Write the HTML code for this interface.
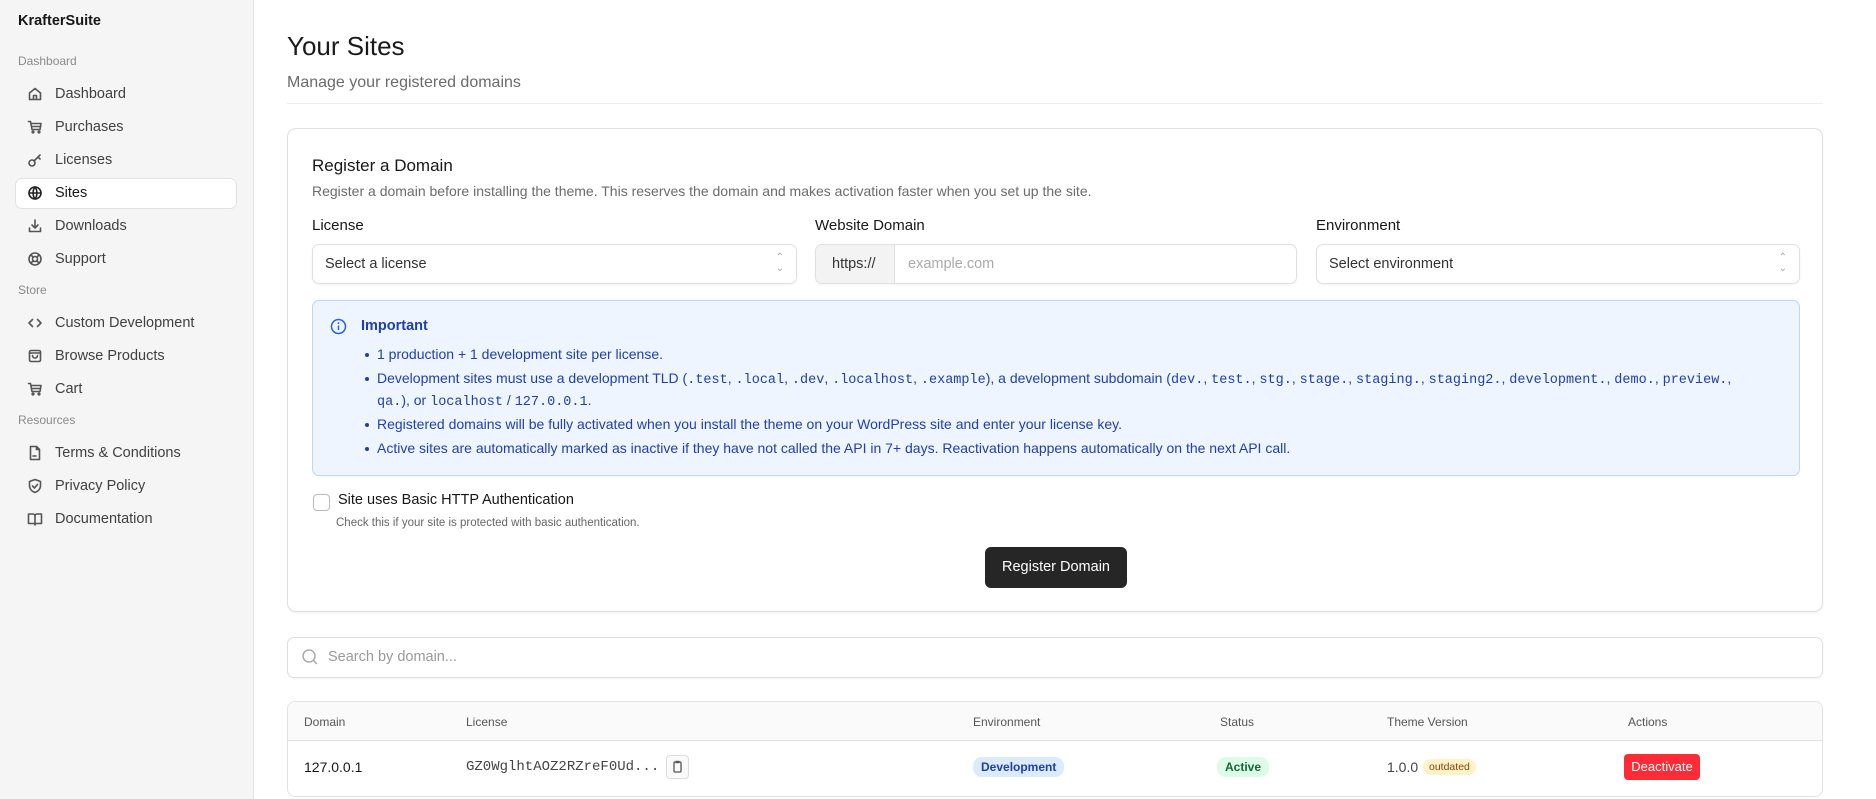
<!DOCTYPE html>
<html><head><meta charset="utf-8"><style>
*{box-sizing:border-box;margin:0;padding:0}
body{width:1876px;height:799px;overflow:hidden;background:#fff;font-family:"Liberation Sans",sans-serif;color:#171717;position:relative}
.a{position:absolute;white-space:nowrap}
.side{position:absolute;left:0;top:0;width:254px;height:799px;background:#f5f5f5;border-right:1px solid #e5e5e5}
.sec{font-size:12px;color:#8a8a8a;left:18px}
.nav{left:55px;font-size:14.5px;color:#404040;transform:translateY(-50%)}
.ic{position:absolute;left:27px;width:16px;height:16px;transform:translateY(-50%)}
.ic svg{width:16px;height:16px;fill:none;stroke:#555;stroke-width:1.6;stroke-linecap:round;stroke-linejoin:round}
.lbl{font-size:15px;color:#171717}
.box{position:absolute;border:1px solid #e0e0e0;border-radius:7px;background:#fff;box-shadow:0 1px 2px rgba(0,0,0,.05)}
.ph{font-size:14.5px;color:#333}
.info li{list-style:none;position:absolute;left:377px;font-size:14px;color:#1e40af;white-space:nowrap}
.info li:before{content:"";position:absolute;left:-12px;top:7px;width:4px;height:4px;border-radius:50%;background:#1e40af}
.info li.nb:before{display:none}
code{font-family:"Liberation Mono",monospace;font-size:13.5px}
.th{font-size:12px;color:#555;top:722px;transform:translateY(-50%)}
.td{top:767px;transform:translateY(-50%)}
.badge{border-radius:9px;font-size:12px;font-weight:bold;padding:3px 8px}
</style></head><body>
<div class="side">
<div class="a" style="left:18px;top:13px;font-size:14.5px;font-weight:bold">KrafterSuite</div>
<div class="a sec" style="top:54px">Dashboard</div>
<div class="a" style="left:15px;top:178px;width:222px;height:31px;background:#fff;border:1px solid #e2e2e2;border-radius:7px"></div>
<div class="ic" style="top:94px"><svg viewBox="0 0 16 16"><path d="M2.5 7L8 2.5 13.5 7v6.5h-11z M6.5 13.5v-4h3v4"/></svg></div>
<div class="a nav" style="top:94px">Dashboard</div>
<div class="ic" style="top:127px"><svg viewBox="0 0 16 16"><path d="M1.5 2.5h2l1.5 8h8l1-6H4 M5 7.5h8.5"/><circle cx="6" cy="13" r=".8"/><circle cx="12" cy="13" r=".8"/></svg></div>
<div class="a nav" style="top:127px">Purchases</div>
<div class="ic" style="top:160px"><svg viewBox="0 0 16 16"><circle cx="5" cy="11" r="3"/><path d="M7 9l6-6 M11 5l2 2"/></svg></div>
<div class="a nav" style="top:160px">Licenses</div>
<div class="ic" style="top:193px"><svg viewBox="0 0 16 16" style="stroke:#222"><circle cx="8" cy="8" r="6"/><path d="M2 8h12 M8 2c-2.5 3-2.5 9 0 12 M8 2c2.5 3 2.5 9 0 12"/></svg></div>
<div class="a nav" style="top:193px;color:#171717">Sites</div>
<div class="ic" style="top:226px"><svg viewBox="0 0 16 16"><path d="M8 2v8 M5 7l3 3 3-3 M2.5 10v3.5h11V10"/></svg></div>
<div class="a nav" style="top:226px">Downloads</div>
<div class="ic" style="top:259px"><svg viewBox="0 0 16 16"><circle cx="8" cy="8" r="6"/><circle cx="8" cy="8" r="2.5"/><path d="M4 4l2.2 2.2 M12 4L9.8 6.2 M4 12l2.2-2.2 M12 12l-2.2-2.2"/></svg></div>
<div class="a nav" style="top:259px">Support</div>
<div class="a sec" style="top:283px">Store</div>
<div class="ic" style="top:323px"><svg viewBox="0 0 16 16"><path d="M5.5 4.5L2 8l3.5 3.5 M10.5 4.5L14 8l-3.5 3.5"/></svg></div>
<div class="a nav" style="top:323px">Custom Development</div>
<div class="ic" style="top:356px"><svg viewBox="0 0 16 16"><rect x="2.5" y="2.5" width="11" height="11" rx="1.5"/><path d="M2.5 5h11 M5.5 7.5a2.5 2.5 0 0 0 5 0"/></svg></div>
<div class="a nav" style="top:356px">Browse Products</div>
<div class="ic" style="top:389px"><svg viewBox="0 0 16 16"><path d="M1.5 2.5h2l1.5 8h8l1-6H4 M5 7.5h8.5"/><circle cx="6" cy="13" r=".8"/><circle cx="12" cy="13" r=".8"/></svg></div>
<div class="a nav" style="top:389px">Cart</div>
<div class="a sec" style="top:413px">Resources</div>
<div class="ic" style="top:453px"><svg viewBox="0 0 16 16"><path d="M3.5 1.5h6l3 3v10h-9z M9.5 1.5v3h3 M6 11h3"/></svg></div>
<div class="a nav" style="top:453px">Terms &amp; Conditions</div>
<div class="ic" style="top:486px"><svg viewBox="0 0 16 16"><path d="M8 1.5l5.5 2v4c0 3.5-2.5 6-5.5 7-3-1-5.5-3.5-5.5-7v-4z M5.5 8l2 2 3-3.5"/></svg></div>
<div class="a nav" style="top:486px">Privacy Policy</div>
<div class="ic" style="top:519px"><svg viewBox="0 0 16 16"><path d="M1.5 3h4.5a2 2 0 0 1 2 2v9a1.5 1.5 0 0 0-1.5-1.5h-5z M14.5 3H10a2 2 0 0 0-2 2v9a1.5 1.5 0 0 1 1.5-1.5h5z"/></svg></div>
<div class="a nav" style="top:519px">Documentation</div>
</div>

<div class="a" style="left:287px;top:31px;font-size:26px;color:#1a1a1a">Your Sites</div>
<div class="a" style="left:287px;top:74px;font-size:16px;color:#6b6b6b">Manage your registered domains</div>
<div class="a" style="left:287px;top:103px;width:1536px;height:1px;background:#eee"></div>

<div class="box" style="left:287px;top:128px;width:1536px;height:484px;border-radius:9px"></div>
<div class="a" style="left:312px;top:156px;font-size:17px">Register a Domain</div>
<div class="a" style="left:312px;top:183px;font-size:14px;color:#6b6b6b">Register a domain before installing the theme. This reserves the domain and makes activation faster when you set up the site.</div>
<div class="a lbl" style="left:312px;top:217px">License</div>
<div class="a lbl" style="left:815px;top:217px">Website Domain</div>
<div class="a lbl" style="left:1316px;top:217px">Environment</div>
<div class="box" style="left:312px;top:244px;width:485px;height:40px"><span class="a ph" style="left:12px;top:11px">Select a license</span><span class="a" style="right:12px;top:7px;font-size:10px;color:#aaa;line-height:11px">⌃<br>⌄</span></div>
<div class="box" style="left:815px;top:244px;width:482px;height:40px;overflow:hidden"><div class="a" style="left:0;top:0;width:79px;height:38px;background:#f3f3f3;border-right:1px solid #e0e0e0"></div><span class="a ph" style="left:16px;top:11px">https://</span><span class="a ph" style="left:92px;top:11px;color:#aaa">example.com</span></div>
<div class="box" style="left:1316px;top:244px;width:484px;height:40px"><span class="a ph" style="left:12px;top:11px">Select environment</span><span class="a" style="right:12px;top:7px;font-size:10px;color:#aaa;line-height:11px">⌃<br>⌄</span></div>

<div class="a info" style="left:312px;top:300px;width:1488px;height:176px;background:#eef5ff;border:1px solid #bcd6fb;border-radius:7px"></div>
<svg class="a" style="left:330px;top:318px" width="17" height="17" viewBox="0 0 17 17"><circle cx="8.5" cy="8.5" r="7" fill="none" stroke="#2563eb" stroke-width="1.5"/><path d="M8.5 7.5v4.5" stroke="#2563eb" stroke-width="1.5"/><circle cx="8.5" cy="5.2" r=".9" fill="#2563eb"/></svg>
<div class="a" style="left:361px;top:318px;font-size:14.5px;font-weight:bold;color:#1e40af">Important</div>
<ul class="info">
<li style="top:346px">1 production + 1 development site per license.</li>
<li style="top:370px">Development sites must use a development TLD (<code>.test</code>, <code>.local</code>, <code>.dev</code>, <code>.localhost</code>, <code>.example</code>), a development subdomain (<code>dev.</code>, <code>test.</code>, <code>stg.</code>, <code>stage.</code>, <code>staging.</code>, <code>staging2.</code>, <code>development.</code>, <code>demo.</code>, <code>preview.</code>,</li>
<li class="nb" style="top:392px"><code>qa.</code>), or <code>localhost</code> / <code>127.0.0.1</code>.</li>
<li style="top:416px">Registered domains will be fully activated when you install the theme on your WordPress site and enter your license key.</li>
<li style="top:440px">Active sites are automatically marked as inactive if they have not called the API in 7+ days. Reactivation happens automatically on the next API call.</li>
</ul>

<div class="a" style="left:313px;top:494px;width:17px;height:17px;border:1px solid #bbb;border-radius:4px;background:#fff"></div>
<div class="a" style="left:338px;top:492px;font-size:14.5px">Site uses Basic HTTP Authentication</div>
<div class="a" style="left:336px;top:517px;font-size:11.5px;color:#666">Check this if your site is protected with basic authentication.</div>
<div class="a" style="left:985px;top:547px;width:142px;height:41px;background:#262626;border-radius:6px;color:#fff;font-size:14.5px;text-align:center;line-height:41px">Register Domain</div>

<div class="box" style="left:287px;top:637px;width:1536px;height:41px"></div>
<svg class="a" style="left:301px;top:648px" width="18" height="18" viewBox="0 0 18 18"><circle cx="8" cy="8" r="6" fill="none" stroke="#aaa" stroke-width="1.5"/><path d="M12.5 12.5L16 16" stroke="#aaa" stroke-width="1.5"/></svg>
<div class="a" style="left:328px;top:649px;font-size:14.5px;color:#999">Search by domain...</div>

<div class="a" style="left:287px;top:701px;width:1536px;height:96px;border:1px solid #e3e3e3;border-radius:8px;overflow:hidden"><div style="height:39px;background:#fafafa;border-bottom:1px solid #e3e3e3"></div></div>
<div class="a th" style="left:304px">Domain</div>
<div class="a th" style="left:466px">License</div>
<div class="a th" style="left:973px">Environment</div>
<div class="a th" style="left:1220px">Status</div>
<div class="a th" style="left:1387px">Theme Version</div>
<div class="a th" style="left:1628px">Actions</div>
<div class="a td" style="left:304px;font-size:14px">127.0.0.1</div>
<div class="a td" style="left:466px;font-family:'Liberation Mono',monospace;font-size:14px;color:#444">GZ0WglhtAOZ2RZreF0Ud...</div>
<div class="a td" style="left:666px;width:23px;height:24px;border:1px solid #ddd;border-radius:4px;background:#fafafa"><svg width="21" height="22" viewBox="0 0 21 22"><rect x="7" y="6" width="7" height="10" rx="1" fill="none" stroke="#555" stroke-width="1.3"/><rect x="8.5" y="4.8" width="4" height="2.4" fill="#555"/></svg></div>
<div class="a td badge" style="left:973px;background:#dbeafe;color:#1e40af">Development</div>
<div class="a td badge" style="left:1217px;background:#dcfce7;color:#166534">Active</div>
<div class="a td" style="left:1387px;font-size:14px;color:#444">1.0.0</div>
<div class="a td" style="left:1423px;background:#fef3c7;color:#92400e;font-size:10.5px;padding:2px 6px;border-radius:8px">outdated</div>
<div class="a td" style="left:1624px;width:76px;height:26px;background:#fb2c36;color:#fff;border-radius:4px;font-size:13px;text-align:center;line-height:26px">Deactivate</div>
</body></html>
